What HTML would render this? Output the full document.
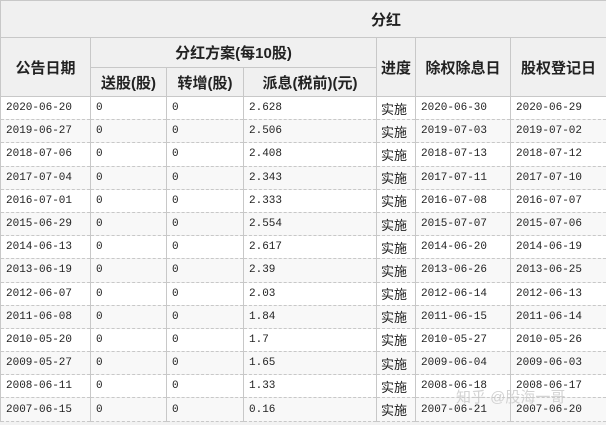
<!DOCTYPE html><html><head><meta charset="utf-8"><style>
body{margin:0;width:606px;height:425px;overflow:hidden;background:#f2f2f2;font-family:"Liberation Mono","Noto Sans CJK SC",monospace;}
table{border-collapse:collapse;width:606px;table-layout:fixed;position:absolute;top:0;left:0}
td,th{padding:0 0 0 5px;font-size:11px;color:#222;border-left:1px solid #c8c8c8;border-right:1px solid #c8c8c8;white-space:nowrap;overflow:hidden}
th{background:#f0f0f0;font-family:"Liberation Sans","Noto Sans CJK SC",sans-serif;font-size:15px;font-weight:bold;text-align:center;padding:0;border:1px solid #c8c8c8;color:#222}
tr.d td{height:22.2px;border-bottom:1px dashed #c8c8c8}
tr.d:nth-child(odd) td{background:#fff}
tr.d:nth-child(even) td{background:#f8f8f8}
td.c{font-family:"Liberation Sans","Noto Sans CJK SC",sans-serif;font-size:13px;padding:0 0 0 4px}
</style></head><body><table>
<colgroup><col style="width:90px"><col style="width:76px"><col style="width:77px"><col style="width:133px"><col style="width:39px"><col style="width:95px"><col style="width:96px"></colgroup>
<tr><th colspan="7" style="height:36px;text-align:left;padding-left:370px">分红</th></tr>
<tr><th rowspan="2">公告日期</th><th colspan="3" style="height:29px">分红方案(每10股)</th><th rowspan="2">进度</th><th rowspan="2">除权除息日</th><th rowspan="2">股权登记日</th></tr>
<tr><th style="height:28px">送股(股)</th><th>转增(股)</th><th>派息(税前)(元)</th></tr>
<tbody>
<tr class="d"><td>2020-06-20</td><td>0</td><td>0</td><td>2.628</td><td class="c">实施</td><td>2020-06-30</td><td>2020-06-29</td></tr>
<tr class="d"><td>2019-06-27</td><td>0</td><td>0</td><td>2.506</td><td class="c">实施</td><td>2019-07-03</td><td>2019-07-02</td></tr>
<tr class="d"><td>2018-07-06</td><td>0</td><td>0</td><td>2.408</td><td class="c">实施</td><td>2018-07-13</td><td>2018-07-12</td></tr>
<tr class="d"><td>2017-07-04</td><td>0</td><td>0</td><td>2.343</td><td class="c">实施</td><td>2017-07-11</td><td>2017-07-10</td></tr>
<tr class="d"><td>2016-07-01</td><td>0</td><td>0</td><td>2.333</td><td class="c">实施</td><td>2016-07-08</td><td>2016-07-07</td></tr>
<tr class="d"><td>2015-06-29</td><td>0</td><td>0</td><td>2.554</td><td class="c">实施</td><td>2015-07-07</td><td>2015-07-06</td></tr>
<tr class="d"><td>2014-06-13</td><td>0</td><td>0</td><td>2.617</td><td class="c">实施</td><td>2014-06-20</td><td>2014-06-19</td></tr>
<tr class="d"><td>2013-06-19</td><td>0</td><td>0</td><td>2.39</td><td class="c">实施</td><td>2013-06-26</td><td>2013-06-25</td></tr>
<tr class="d"><td>2012-06-07</td><td>0</td><td>0</td><td>2.03</td><td class="c">实施</td><td>2012-06-14</td><td>2012-06-13</td></tr>
<tr class="d"><td>2011-06-08</td><td>0</td><td>0</td><td>1.84</td><td class="c">实施</td><td>2011-06-15</td><td>2011-06-14</td></tr>
<tr class="d"><td>2010-05-20</td><td>0</td><td>0</td><td>1.7</td><td class="c">实施</td><td>2010-05-27</td><td>2010-05-26</td></tr>
<tr class="d"><td>2009-05-27</td><td>0</td><td>0</td><td>1.65</td><td class="c">实施</td><td>2009-06-04</td><td>2009-06-03</td></tr>
<tr class="d"><td>2008-06-11</td><td>0</td><td>0</td><td>1.33</td><td class="c">实施</td><td>2008-06-18</td><td>2008-06-17</td></tr>
<tr class="d"><td>2007-06-15</td><td>0</td><td>0</td><td>0.16</td><td class="c">实施</td><td>2007-06-21</td><td>2007-06-20</td></tr>
</tbody></table>
<div style="position:absolute;left:456px;top:386px;font-family:'Liberation Sans','Noto Sans CJK SC',sans-serif;font-size:15px;color:rgba(200,200,200,0.8)">知乎 @股海一哥</div>
</body></html>
